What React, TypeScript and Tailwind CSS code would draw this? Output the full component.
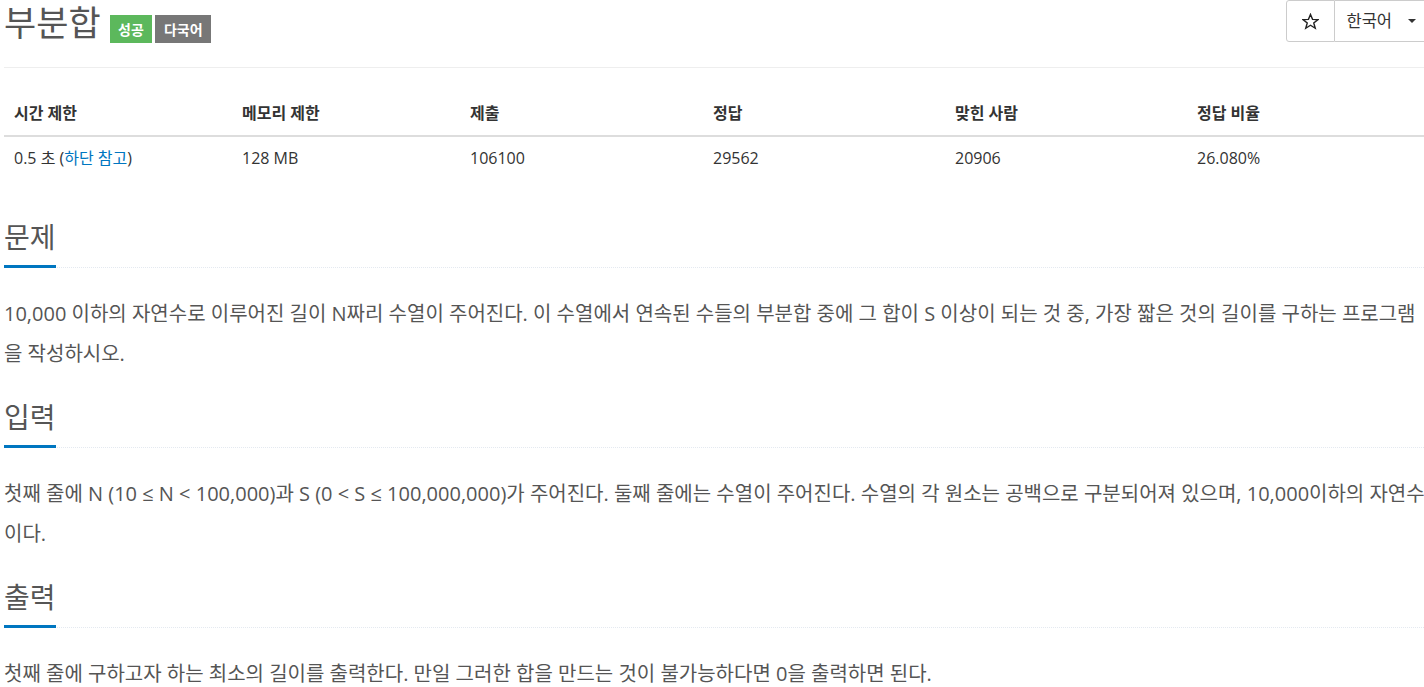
import React from "react";

const FONT = "font-['Open_Sans','Noto_Sans_CJK_KR',sans-serif]";

function Section({ title, children }: { title: string; children: React.ReactNode }) {
  return (
    <section className="mt-[26px] first:mt-0">
      <div className="border-b border-dotted border-[#e4e9f0] flex">
        <h2 className="text-[28px] leading-[34px] text-[#555] pb-[11px] border-b-[3px] border-[#0076c0] mb-[-1px] font-normal">
          {title}
        </h2>
      </div>
      <p className="mt-[26px] text-[20px] leading-[40px] text-[#555]">{children}</p>
    </section>
  );
}

export default function App() {
  const headers = ["시간 제한", "메모리 제한", "제출", "정답", "맞힌 사람", "정답 비율"];
  return (
    <div className={`w-[1424px] h-[687px] overflow-hidden bg-white ${FONT}`}>
      <div className="ml-[4px] w-[1426px]">
        {/* Title row */}
        <div className="flex items-start justify-between">
          <div className="flex items-start">
            <h1 className="text-[35px] leading-[46px] text-[#555] font-normal">부분합</h1>
            <span className="ml-[9px] mt-[15px] h-[28px] px-[8.5px] flex items-center bg-[#5cb85c] text-white text-[14px] font-bold">성공</span>
            <span className="ml-[3px] mt-[15px] h-[28px] px-[8.5px] flex items-center bg-[#777] text-white text-[14px] font-bold">다국어</span>
          </div>
          <div className="flex mr-[-7px]">
            <button className="w-[49px] h-[42px] border border-[#ccc] rounded-l-[3px] flex items-center justify-center bg-white">
              <svg width="17" height="17" viewBox="0 0 24 24" fill="none" stroke="#222" strokeWidth="2" strokeLinejoin="miter">
                <polygon points="12,2 14.9,9 22.5,9.3 16.6,14 18.7,21.5 12,17.3 5.3,21.5 7.4,14 1.5,9.3 9.1,9" />
              </svg>
            </button>
            <button className="h-[42px] border border-l-0 border-[#ccc] flex items-center pl-[11px] pr-[20px] bg-white text-[16.5px] text-[#333]">
              한국어
              <span className="ml-[16px] w-0 h-0 border-l-[4px] border-r-[4px] border-t-[4px] border-l-transparent border-r-transparent border-t-[#333]" />
            </button>
          </div>
        </div>
        <div className="mt-[21px] border-t border-[#eee]" />

        {/* Table */}
        <div className="mt-[23px] text-[16px] text-[#333]">
          <div className="grid grid-cols-[228px_228px_243px_242px_242px_1fr] border-b-2 border-[#ddd]">
            {headers.map((h) => (
              <div key={h} className="px-[10px] py-[10px] leading-[24px] font-bold">{h}</div>
            ))}
          </div>
          <div className="grid grid-cols-[228px_228px_243px_242px_242px_1fr]">
            <div className="px-[10px] py-[9px] leading-[24px]">
              0.5 초 (<a className="text-[#0076c0]">하단 참고</a>)
            </div>
            <div className="px-[10px] py-[9px] leading-[24px]">128 MB</div>
            <div className="px-[10px] py-[9px] leading-[24px]">106100</div>
            <div className="px-[10px] py-[9px] leading-[24px]">29562</div>
            <div className="px-[10px] py-[9px] leading-[24px]">20906</div>
            <div className="px-[10px] py-[9px] leading-[24px]">26.080%</div>
          </div>
        </div>

        <div className="mt-[41px]">
          <Section title="문제">
            10,000 이하의 자연수로 이루어진 길이 N짜리 수열이 주어진다. 이 수열에서 연속된 수들의 부분합 중에 그 합이 S 이상이 되는 것 중, 가장 짧은 것의 길이를 구하는 프로그램을 작성하시오.
          </Section>
          <Section title="입력">
            첫째 줄에 N (10 ≤ N &lt; 100,000)과 S (0 &lt; S ≤ 100,000,000)가 주어진다. 둘째 줄에는 수열이 주어진다. 수열의 각 원소는 공백으로 구분되어져 있으며, 10,000이하의 자연수이다.
          </Section>
          <Section title="출력">
            첫째 줄에 구하고자 하는 최소의 길이를 출력한다. 만일 그러한 합을 만드는 것이 불가능하다면 0을 출력하면 된다.
          </Section>
        </div>
      </div>
    </div>
  );
}
